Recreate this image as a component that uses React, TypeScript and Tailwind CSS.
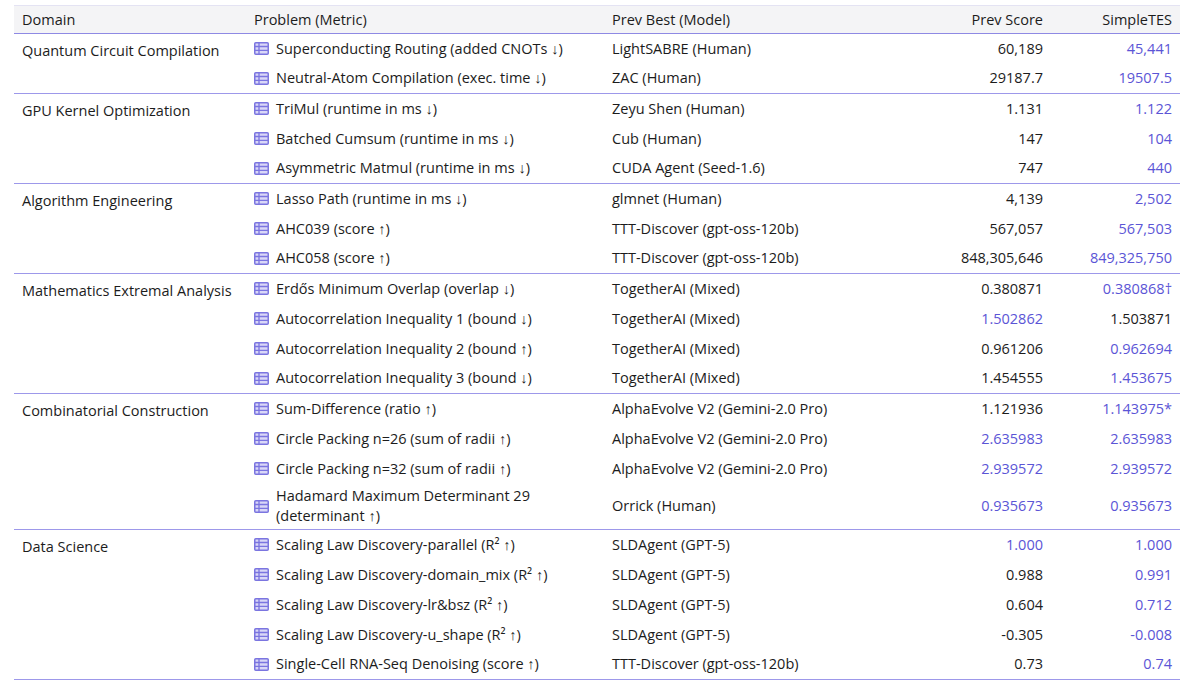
const P = "text-[#5b55d6]";
type R = [string, string, string, string, boolean, boolean];
const groups: { d: string; rows: R[] }[] = [
  { d: "Quantum Circuit Compilation", rows: [
    ["Superconducting Routing (added CNOTs ↓)", "LightSABRE (Human)", "60,189", "45,441", false, true],
    ["Neutral-Atom Compilation (exec. time ↓)", "ZAC (Human)", "29187.7", "19507.5", false, true]]},
  { d: "GPU Kernel Optimization", rows: [
    ["TriMul (runtime in ms ↓)", "Zeyu Shen (Human)", "1.131", "1.122", false, true],
    ["Batched Cumsum (runtime in ms ↓)", "Cub (Human)", "147", "104", false, true],
    ["Asymmetric Matmul (runtime in ms ↓)", "CUDA Agent (Seed-1.6)", "747", "440", false, true]]},
  { d: "Algorithm Engineering", rows: [
    ["Lasso Path (runtime in ms ↓)", "glmnet (Human)", "4,139", "2,502", false, true],
    ["AHC039 (score ↑)", "TTT-Discover (gpt-oss-120b)", "567,057", "567,503", false, true],
    ["AHC058 (score ↑)", "TTT-Discover (gpt-oss-120b)", "848,305,646", "849,325,750", false, true]]},
  { d: "Mathematics Extremal Analysis", rows: [
    ["Erdős Minimum Overlap (overlap ↓)", "TogetherAI (Mixed)", "0.380871", "0.380868†", false, true],
    ["Autocorrelation Inequality 1 (bound ↓)", "TogetherAI (Mixed)", "1.502862", "1.503871", true, false],
    ["Autocorrelation Inequality 2 (bound ↑)", "TogetherAI (Mixed)", "0.961206", "0.962694", false, true],
    ["Autocorrelation Inequality 3 (bound ↓)", "TogetherAI (Mixed)", "1.454555", "1.453675", false, true]]},
  { d: "Combinatorial Construction", rows: [
    ["Sum-Difference (ratio ↑)", "AlphaEvolve V2 (Gemini-2.0 Pro)", "1.121936", "1.143975*", false, true],
    ["Circle Packing n=26 (sum of radii ↑)", "AlphaEvolve V2 (Gemini-2.0 Pro)", "2.635983", "2.635983", true, true],
    ["Circle Packing n=32 (sum of radii ↑)", "AlphaEvolve V2 (Gemini-2.0 Pro)", "2.939572", "2.939572", true, true],
    ["Hadamard Maximum Determinant 29\n(determinant ↑)", "Orrick (Human)", "0.935673", "0.935673", true, true]]},
  { d: "Data Science", rows: [
    ["Scaling Law Discovery-parallel (R² ↑)", "SLDAgent (GPT-5)", "1.000", "1.000", true, true],
    ["Scaling Law Discovery-domain_mix (R² ↑)", "SLDAgent (GPT-5)", "0.988", "0.991", false, true],
    ["Scaling Law Discovery-lr&bsz (R² ↑)", "SLDAgent (GPT-5)", "0.604", "0.712", false, true],
    ["Scaling Law Discovery-u_shape (R² ↑)", "SLDAgent (GPT-5)", "-0.305", "-0.008", false, true],
    ["Single-Cell RNA-Seq Denoising (score ↑)", "TTT-Discover (gpt-oss-120b)", "0.73", "0.74", false, true]]},
];
function Icon() {
  return (
    <svg width="15" height="13" viewBox="0 0 15 13" className="shrink-0">
      <rect x="0.75" y="0.75" width="13.5" height="11.5" rx="1" fill="#d9d7f7" stroke="#7b75e0" strokeWidth="1.5" />
      <path d="M1 4.5H14M1 8.3H14M5 1V12.5" stroke="#7b75e0" strokeWidth="1.3" />
    </svg>
  );
}
export default function App() {
  return (
    <div className="w-[1200px] h-[695px] bg-white pt-[5px] pl-[14px] text-[14.5px] text-[#1c1c1c]" style={{ fontFamily: "'Open Sans', sans-serif" }}>
      <table className="w-[1166px] border-collapse">
        <thead>
          <tr className="bg-[#f4f4f6] border-t border-t-[#e4e3f3] border-b border-b-[#8e89e4] h-[28px]">
            <th className="font-normal text-left pl-2 w-[240px]">Domain</th>
            <th className="font-normal text-left pl-0 w-[358px]">Problem (Metric)</th>
            <th className="font-normal text-left">Prev Best (Model)</th>
            <th className="font-normal text-right w-[140px]">Prev Score</th>
            <th className="font-normal text-right pr-2 w-[137px]">SimpleTES</th>
          </tr>
        </thead>
        <tbody>
          {groups.map((g) =>
            g.rows.map((r, i) => (
              <tr key={g.d + i} className={i === g.rows.length - 1 ? "border-b border-b-[#9d98ea]" : ""}>
                {i === 0 && (
                  <td rowSpan={g.rows.length} className="align-top pl-2 pt-[6px]">{g.d}</td>
                )}
                <td className={r[0].includes("\n") ? "h-[46px]" : "h-[30px]"}>
                  <div className="flex items-center gap-[7px] pl-0">
                    <Icon />
                    <span className="whitespace-pre-line leading-[20px]">{r[0]}</span>
                  </div>
                </td>
                <td>{r[1]}</td>
                <td className={"text-right " + (r[4] ? P : "")}>{r[2]}</td>
                <td className={"text-right pr-2 " + (r[5] ? P : "")}>{r[3]}</td>
              </tr>
            ))
          )}
        </tbody>
      </table>
    </div>
  );
}
